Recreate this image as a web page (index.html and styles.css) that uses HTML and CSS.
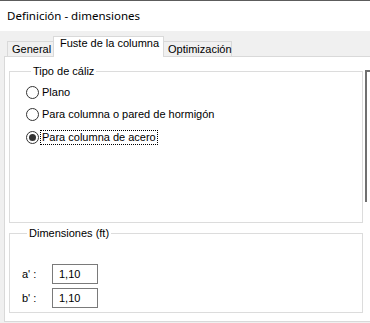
FILE: index.html
```html
<!DOCTYPE html>
<html lang="es">
<head>
    <meta charset="UTF-8">
    <meta name="viewport" content="width=device-width, initial-scale=1.0">
    <title>Definición - dimensiones</title>
    <link rel="stylesheet" href="styles.css">
</head>
<body>
    <div class="window">
        <div class="titlebar">Definición - dimensiones</div>

        <div class="tabstrip">
            <div class="tab tab-first">General</div>
            <div class="tab tab-active">Fuste de la columna</div>
            <div class="tab tab-last">Optimización</div>
        </div>

        <div class="panel">
            <div class="panel-main">
                <fieldset class="group group-type">
                    <legend>Tipo de cáliz</legend>
                    <div class="radio-row">
                        <span class="radio"></span>
                        <span class="radio-label">Plano</span>
                    </div>
                    <div class="radio-row">
                        <span class="radio"></span>
                        <span class="radio-label">Para columna o pared de hormigón</span>
                    </div>
                    <div class="radio-row">
                        <span class="radio checked"></span>
                        <span class="radio-label focused">Para columna de acero</span>
                    </div>
                </fieldset>

                <fieldset class="group group-dims">
                    <legend>Dimensiones (ft)</legend>
                    <div class="field-row">
                        <span class="field-label">a' :</span>
                        <span class="field-input">1,10</span>
                    </div>
                    <div class="field-row">
                        <span class="field-label">b' :</span>
                        <span class="field-input">1,10</span>
                    </div>
                </fieldset>
            </div>
            <div class="preview"></div>
        </div>
    </div>
</body>
</html>
```

FILE: styles.css
```css
body {
    margin: 0;
    background-color: #f0f0f0;
    font-family: "Liberation Sans", Arial, sans-serif;
    font-size: 11px;
    color: #000;
    overflow: hidden;
}
.window {
    width: 370px;
    height: 323px;
    overflow: hidden;
}
.titlebar {
    height: 30px;
    line-height: 30px;
    border-top: 1px solid #5c5c5c;
    background: #fff;
    padding-left: 7px;
    font-family: "Noto Sans", "Segoe UI", sans-serif;
    font-size: 11.5px;
}
.tabstrip {
    display: flex;
    align-items: flex-end;
    height: 25px;
    padding-left: 7px;
}
.tab {
    box-sizing: border-box;
    height: 15px;
    line-height: 15px;
    border: 1px solid #d9d9d9;
    border-bottom: none;
    background: #f0f0f0;
    white-space: nowrap;
}
.tab-first {
    width: 46px;
    padding-left: 4px;
    border-right: none;
}
.tab-active {
    position: relative;
    z-index: 1;
    width: 111px;
    height: 21px;
    margin-bottom: -1px;
    padding-left: 6px;
    line-height: 12px;
    background: #fff;
}
.tab-last {
    width: 68px;
    padding-left: 4px;
    border-left: none;
}
.panel {
    display: flex;
    margin-left: 4px;
    height: 266px;
    border: 1px solid #d9d9d9;
    background: #fff;
    padding: 6px 0 0 4px;
    box-sizing: border-box;
    width: 400px;
}
.panel-main {
    width: 354px;
    flex-shrink: 0;
}
.group {
    margin: 0;
    padding: 0;
    border: 1px solid #dcdcdc;
    min-width: 0;
}
.group legend {
    margin-left: 5px;
    padding: 0 2px;
    line-height: 16px;
}
.group-type {
    height: 160px;
    box-sizing: border-box;
    padding-top: 2px;
    padding-left: 16px;
}
.radio-row {
    display: flex;
    align-items: center;
    height: 22.5px;
}
.radio {
    box-sizing: border-box;
    width: 13px;
    height: 13px;
    border: 1px solid #333;
    border-radius: 50%;
    margin-right: 1px;
    display: flex;
    align-items: center;
    justify-content: center;
}
.radio.checked::after {
    content: "";
    width: 7px;
    height: 7px;
    border-radius: 50%;
    background: #333;
}
.radio-label {
    line-height: 13px;
    padding: 0 1px;
    border: 1px dotted transparent;
}
.radio-label.focused {
    border-color: #000;
}
.group-dims {
    margin-top: 2px;
    height: 88px;
    box-sizing: border-box;
    padding-top: 23px;
    padding-left: 12px;
}
.field-row {
    display: flex;
    align-items: center;
    height: 20px;
    margin-bottom: 4px;
}
.field-label {
    width: 30px;
}
.field-input {
    box-sizing: border-box;
    width: 46px;
    height: 20px;
    line-height: 18px;
    border: 1px solid #7a7a7a;
    padding-left: 6px;
}
.preview {
    margin-left: 2px;
    margin-top: 7px;
    width: 30px;
    height: 132px;
    box-sizing: border-box;
    border-left: 2px solid #707070;
    border-top: 2px solid #707070;
    border-right: 1px solid #a0a0a0;
}
```
